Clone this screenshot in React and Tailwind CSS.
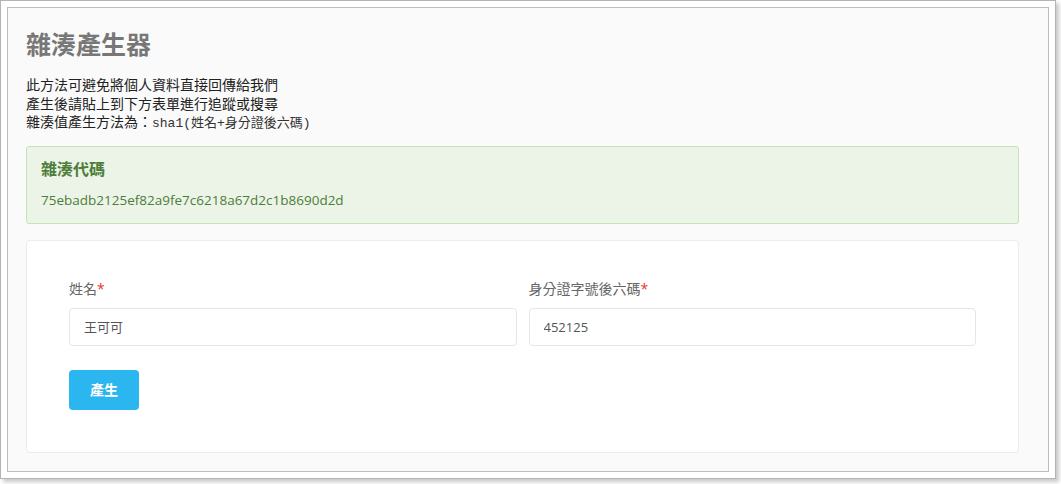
export default function App() {
  return (
    <div className="w-[1061px] h-[484px] bg-white font-['Open_Sans','Noto_Sans_CJK_TC',sans-serif]">
      {/* outer frame */}
      <div className="w-[1056px] h-[479px] border border-[#b4b4b4] bg-white p-[6px] shadow-[3px_3px_4px_rgba(0,0,0,0.22)]">
        <div className="h-full border border-[#bdbdbd] bg-[#fafafa] pl-[18px] pr-[29px] pt-[21px]">
          <h1 className="text-[25px] leading-[30px] font-bold text-[#777]">雜湊產生器</h1>

          <div className="mt-[17px] text-[14px] leading-[18.5px] text-[#222]">
            <p>此方法可避免將個人資料直接回傳給我們</p>
            <p>產生後請貼上到下方表單進行追蹤或搜尋</p>
            <p>
              雜湊值產生方法為：
              <code className="font-['Liberation_Mono','Noto_Sans_CJK_TC',monospace] text-[13px] text-[#333]">
                sha1(姓名+身分證後六碼)
              </code>
            </p>
          </div>

          {/* result alert */}
          <div className="mt-[12px] h-[78px] rounded-[3px] border border-[#c5e3b5] bg-[#ebf4e7] px-[14px] pt-[11px]">
            <div className="text-[16px] leading-[22px] font-bold text-[#4e7d3a]">雜湊代碼</div>
            <div className="mt-[9px] text-[13.5px] leading-[22px] text-[#4e7d3a]">
              75ebadb2125ef82a9fe7c6218a67d2c1b8690d2d
            </div>
          </div>

          {/* form card */}
          <div className="mt-[16px] h-[213px] rounded-[4px] border border-[#ececec] bg-white px-[42px] pt-[38px]">
            <div className="grid grid-cols-2 gap-x-[12px]">
              <div>
                <label className="block text-[14px] leading-[20px] text-[#666]">
                  姓名<span className="text-[#e33]">*</span>
                </label>
                <input
                  type="text"
                  defaultValue="王可可"
                  className="mt-[9px] block h-[38px] w-full rounded-[4px] border border-[#e6e6e6] bg-white px-[14px] text-[13px] text-[#555] outline-none"
                />
              </div>
              <div>
                <label className="block text-[14px] leading-[20px] text-[#666]">
                  身分證字號後六碼<span className="text-[#e33]">*</span>
                </label>
                <input
                  type="text"
                  defaultValue="452125"
                  className="mt-[9px] block h-[38px] w-full rounded-[4px] border border-[#e6e6e6] bg-white px-[14px] text-[13px] text-[#555] outline-none"
                />
              </div>
            </div>
            <button className="mt-[24px] h-[40px] w-[70px] rounded-[4px] bg-[#2bb6ef] text-[14px] font-bold text-white">
              產生
            </button>
          </div>
        </div>
      </div>
    </div>
  );
}
